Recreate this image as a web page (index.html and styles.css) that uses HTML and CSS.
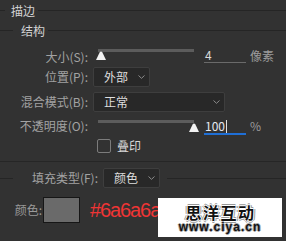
FILE: index.html
```html
<!DOCTYPE html>
<html lang="zh">
<head>
<meta charset="utf-8">
<link rel="stylesheet" href="styles.css">
</head>
<body>
<div class="panel">
  <div class="hdr hdr-1"><span class="hline hline-a"></span><span class="htext">描边</span><span class="hline hline-f"></span></div>
  <div class="hdr hdr-2"><span class="hline hline-b"></span><span class="htext">结构</span><span class="hline hline-f"></span></div>

  <div class="row row-size">
    <span class="lbl">大小(S):</span>
    <div class="slider slider-a">
      <div class="track"></div>
      <svg class="thumb thumb-a" width="10" height="9" viewBox="0 0 10 9"><path d="M0 9 L3.6 1.6 Q5 -0.6 6.4 1.6 L10 9 Z" fill="#f2f2f2"/></svg>
    </div>
    <div class="num num-a">4</div>
    <span class="unit">像素</span>
  </div>

  <div class="row row-pos">
    <span class="lbl">位置(P):</span>
    <div class="dd dd-short"><span>外部</span><svg class="chev" width="7" height="4" viewBox="0 0 7 4"><path d="M0.5 0.5 L3.5 3.3 L6.5 0.5" fill="none" stroke="#8c8c8c" stroke-width="1"/></svg></div>
  </div>

  <div class="row row-mode">
    <span class="lbl">混合模式(B):</span>
    <div class="dd dd-long"><span>正常</span><svg class="chev" width="7" height="4" viewBox="0 0 7 4"><path d="M0.5 0.5 L3.5 3.3 L6.5 0.5" fill="none" stroke="#8c8c8c" stroke-width="1"/></svg></div>
  </div>

  <div class="row row-opa">
    <span class="lbl">不透明度(O):</span>
    <div class="slider slider-b">
      <div class="track"></div>
      <svg class="thumb thumb-b" width="10" height="9" viewBox="0 0 10 9"><path d="M0 9 L3.6 1.6 Q5 -0.6 6.4 1.6 L10 9 Z" fill="#f2f2f2"/></svg>
    </div>
    <div class="num num-b">100<span class="caret"></span></div>
    <span class="unit">%</span>
  </div>

  <div class="row row-chk">
    <span class="box"></span><span class="chk-text">叠印</span>
  </div>

  <div class="divider"></div>

  <div class="row row-fill">
    <span class="hline hline-b"></span>
    <span class="lbl lbl-fill">填充类型(F):</span>
    <div class="dd dd-fill"><span>颜色</span><svg class="chev" width="7" height="4" viewBox="0 0 7 4"><path d="M0.5 0.5 L3.5 3.3 L6.5 0.5" fill="none" stroke="#8c8c8c" stroke-width="1"/></svg></div>
    <span class="hline hline-f hline-fill"></span>
  </div>

  <div class="row row-color">
    <span class="clbl">颜色:</span>
    <span class="swatch"></span>
    <span class="hex">#6a6a6a</span>
  </div>

  <div class="wm">
    <div class="wm-cn">思洋互动</div>
    <div class="wm-en">www.ciya.cn</div>
  </div>
</div>
</body>
</html>
```

FILE: styles.css
```css
* { box-sizing: border-box; }
html, body { margin: 0; padding: 0; }
body {
  background: #323232;
  font-family: "Noto Sans CJK SC", "Noto Sans", sans-serif;
  font-size: 12px;
  color: #a2a2a2;
  width: 286px;
  height: 241px;
  overflow: hidden;
}
.panel { position: relative; width: 286px; height: 241px; }

.hdr { display: flex; align-items: center; }
.hdr-1 { height: 21px; }
.hdr-2 { height: 19px; }
.hline { display: block; height: 1px; background: #252525; flex: none; }
.hline-a { width: 5px; }
.hline-b { width: 13px; }
.hline-f { flex: 1; }
.htext { color: #d4d4d4; line-height: 14px; }
.hdr-1 .htext { margin: 0 3px 0 6px; }
.hdr-2 .htext { margin: 0 3px 0 8px; }

.row { display: flex; align-items: center; }
.lbl { width: 88px; text-align: right; flex: none; line-height: 14px; }

.row-size { margin-top: 5px; height: 22px; align-items: flex-start; }
.row-size .lbl { margin-top: 5px; }
.row-opa { margin-top: 3px; height: 22px; align-items: flex-start; }
.row-opa .lbl { margin-top: 4px; }

.slider { position: relative; width: 96px; height: 22px; margin-left: 10px; flex: none; }
.track { height: 3px; background: #5c5c5c; }
.slider-a .track { margin-top: 4px; }
.slider-b .track { margin-top: 5px; }
.thumb { position: absolute; display: block; }
.thumb-a { left: -2px; top: 6px; }
.thumb-b { left: 91px; top: 8px; }

.num { width: 42px; margin-left: 10px; height: 15px; line-height: 14px; padding-left: 1px; color: #dadada; flex: none; position: relative; }
.num-a { margin-top: 3px; border-bottom: 1px solid #6a6a6a; }
.num-b { margin-top: 4px; border-bottom: 2px solid #1f6fd6; height: 16px; color: #e4e8f0; }
.caret { display: inline-block; width: 1px; height: 13px; background: #e0e0e0; vertical-align: -2px; margin-left: 1px; }

.unit { margin-left: 4px; line-height: 14px; color: #9c9c9c; }
.row-size .unit { margin-top: 4px; }
.row-opa .unit { margin-top: 4px; }

.dd {
  display: flex; align-items: center; justify-content: space-between;
  height: 20px; margin-left: 5px; padding: 0 4px 0 10px;
  background: #282828; border: 1px solid #3e3e3e; border-radius: 2px;
  color: #dedede; line-height: 14px; flex: none;
}
.dd-short { width: 57px; }
.dd-long { width: 132px; }
.dd-fill { width: 57px; height: 20px; }
.chev { display: block; }

.row-pos { height: 20px; }
.row-mode { height: 20px; margin-top: 5px; }

.row-chk { height: 18px; margin-top: 0; }
.box { width: 14px; height: 14px; margin-left: 97px; border: 1px solid #7c7c7c; border-radius: 2px; flex: none; }
.chk-text { margin-left: 6px; color: #d8d8d8; line-height: 14px; }

.divider { height: 1px; background: #262626; margin: 6px 0 6px; }

.row-fill { height: 20px; }
.lbl-fill { width: 85px; }
.hline-fill { margin-left: 7px; }

.row-color { height: 26px; margin-top: 9px; }
.clbl { width: 42px; text-align: right; flex: none; color: #9a9a9a; line-height: 14px; }
.swatch { width: 37px; height: 26px; margin-left: 1px; background: #6a6a6a; border: 1px solid #161616; flex: none; }
.hex {
  margin-left: 10px; color: #ee3535;
  font-family: "Liberation Sans", Arial, sans-serif; font-size: 20px;
  letter-spacing: -1.1px; line-height: 22px; white-space: nowrap;
}

.wm {
  position: absolute; left: 158px; top: 198px; width: 124px; height: 39px;
  background: #ffffff; text-align: center;
}
.wm-cn {
  margin-top: 6px; font-size: 16px; font-weight: 700; line-height: 16px; color: #111;
  letter-spacing: 1.5px; padding-left: 1px;
  text-shadow: 1px 0 0 #fff, -1px 0 0 #fff, 0 1px 0 #fff, 0 -1px 0 #fff, 2px 0 0 #999, -2px 0 0 #999, 0 2px 0 #999, 0 -2px 0 #999;
}
.wm-en {
  margin-top: 2px; font-family: "Liberation Sans", Arial, sans-serif; font-size: 12px; font-weight: 700;
  line-height: 11px; color: #111; letter-spacing: 1px;
  text-shadow: 1px 0 0 #a8a8a8, -1px 0 0 #a8a8a8, 0 1px 0 #a8a8a8, 0 -1px 0 #a8a8a8;
}
```
